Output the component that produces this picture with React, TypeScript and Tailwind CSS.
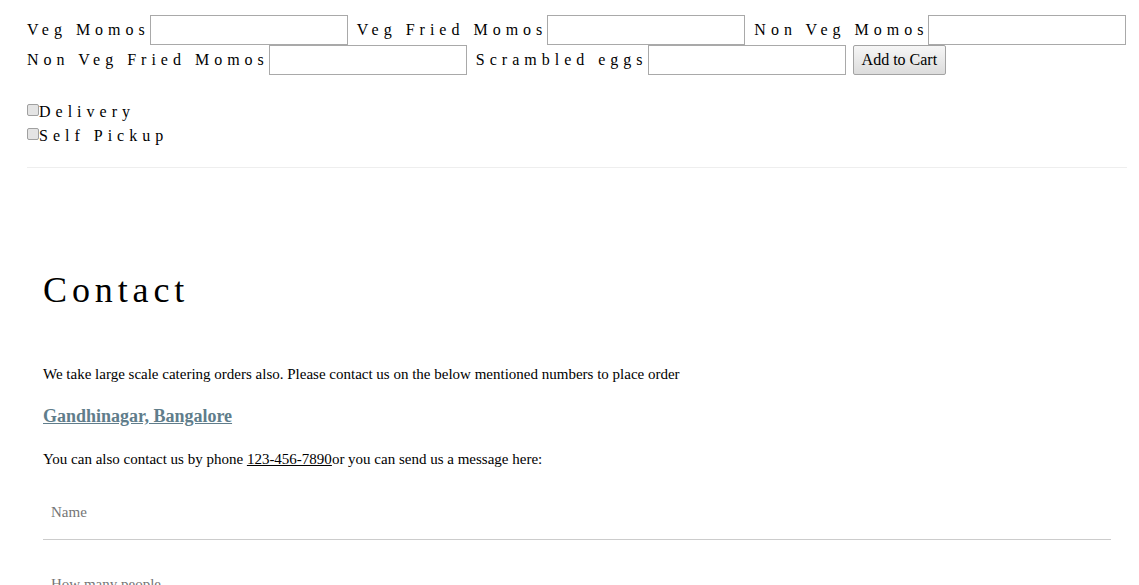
import { useState } from 'react'

const items = ['Veg Momos', 'Veg Fried Momos', 'Non Veg Momos', 'Non Veg Fried Momos', 'Scrambled eggs']

const App = () => {
  const [qty, setQty] = useState<Record<string, string>>({})

  return (
    <div
      className="min-h-screen bg-white text-black pl-[27px] pr-[12px] pt-[15px]"
      style={{ fontFamily: '"Liberation Serif", "Times New Roman", serif' }}
    >
      <form className="">
        <div className="flex flex-wrap items-center gap-x-[9px] -mr-[6px]">
          {items.map((item) => (
            <div key={item} className="flex items-center h-[30px]">
              <span className="text-[16px] tracking-[5px] leading-[30px] whitespace-nowrap">
                {item}
              </span>
              <input
                type="text"
                value={qty[item] || ''}
                onChange={(e) => setQty({ ...qty, [item]: e.target.value })}
                className="w-[198px] h-[30px] border border-[#a9a9a9] bg-white outline-none px-1"
              />
            </div>
          ))}
          <button
            type="button"
            className="h-[30px] -ml-[2px] px-[8px] text-[16px] border border-[#a3a3a3] rounded-[2px] bg-gradient-to-b from-[#f6f6f6] to-[#dcdcdc]"
          >
            Add to Cart
          </button>
        </div>

        <div className="mt-[25px]">
          <label className="flex items-center h-[24px]">
            <input
              type="checkbox"
              className="appearance-none w-[12px] h-[12px] border border-[#a0a0a0] rounded-[2px] bg-[#e4e4e4] -mt-[5px]"
            />
            <span className="text-[16px] tracking-[5px]">Delivery</span>
          </label>
          <label className="flex items-center h-[24px]">
            <input
              type="checkbox"
              className="appearance-none w-[12px] h-[12px] border border-[#a0a0a0] rounded-[2px] bg-[#e4e4e4] -mt-[5px]"
            />
            <span className="text-[16px] tracking-[5px]">Self Pickup</span>
          </label>
        </div>
      </form>

      <hr className="mt-[19px] border-t border-[#eeeeee]" />

      <div className="px-4 pt-[102px]">
        <h2 className="text-[36px] tracking-[4.9px] leading-[40px]">Contact</h2>
        <p className="mt-[54px] text-[15px] leading-[20px]">
          We take large scale catering orders also. Please contact us on the below mentioned numbers to place order
        </p>
        <p className="mt-[20px] text-[18px] leading-[24px] font-bold">
          <a href="#" className="underline text-[#607d8b]">
            Gandhinagar, Bangalore
          </a>
        </p>
        <p className="mt-[21px] text-[15px] leading-[20px]">
          You can also contact us by phone{' '}
          <a href="#" className="underline">
            123-456-7890
          </a>
          or you can send us a message here:
        </p>
        <form className="mt-[16px]">
          <input
            type="text"
            placeholder="Name"
            className="block w-full px-2 py-4 text-[15px] leading-[22px] border-b border-[#cccccc] outline-none placeholder:text-[#757575]"
          />
          <input
            type="text"
            placeholder="How many people"
            className="block w-full mt-[17px] px-2 py-4 text-[15px] leading-[22px] border-b border-[#cccccc] outline-none placeholder:text-[#757575]"
          />
        </form>
      </div>
    </div>
  )
}

export default App
